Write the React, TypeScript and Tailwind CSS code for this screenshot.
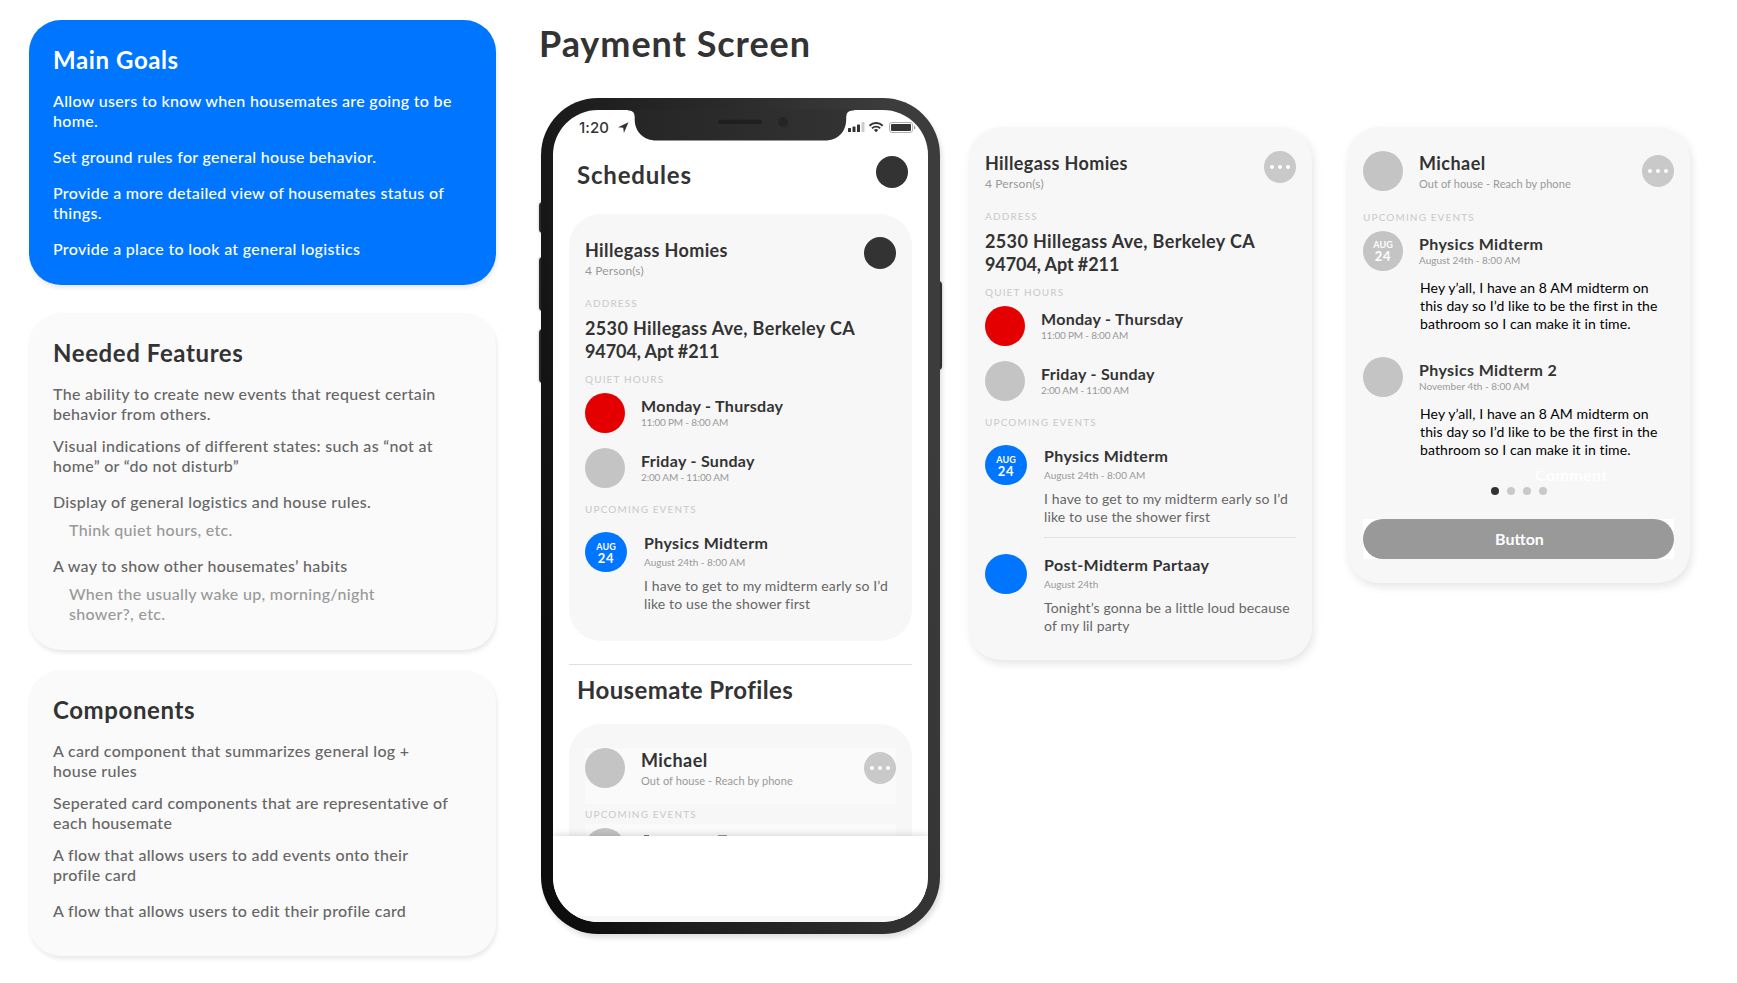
import type { ReactNode } from "react";

function NoteCard({ title, blue, className, children }: { title: string; blue?: boolean; className: string; children: ReactNode }) {
  return (
    <section
      className={`rounded-[32px] px-6 pt-6 shadow-[1px_3px_4px_rgba(0,0,0,0.09)] ${
        blue ? "bg-[#0075ff] text-white" : "bg-[#fafafa] text-[#666]"
      } ${className}`}
    >
      <h2 className={`mb-[15px] text-2xl leading-8 font-bold tracking-[0.6px] ${blue ? "text-white" : "text-[#333]"}`}>{title}</h2>
      <div className="flex flex-col text-base leading-5 font-medium tracking-[0.31px]">{children}</div>
    </section>
  );
}

function Label({ children, className = "" }: { children: ReactNode; className?: string }) {
  return <div className={`text-[10px] leading-3 font-medium tracking-[1.12px] text-[#ccc] ${className}`}>{children}</div>;
}

function MoreButton({ className = "" }: { className?: string }) {
  return (
    <div className={`flex size-8 shrink-0 items-center justify-center gap-1 rounded-full bg-[#c9c9c9] ${className}`}>
      <span className="size-1 rounded-full bg-white" />
      <span className="size-1 rounded-full bg-white" />
      <span className="size-1 rounded-full bg-white" />
    </div>
  );
}

function DateText() {
  return (
    <div className="text-center font-bold text-white">
      <div className="text-[9px] leading-[11px] tracking-[0.1px]">AUG</div>
      <div className="text-[13px] leading-[13px] tracking-[0.6px]">24</div>
    </div>
  );
}

function QuietRow({ color, days, time, timeClass }: { color: string; days: string; time: string; timeClass: string }) {
  return (
    <div className="flex h-10 gap-4">
      <div className={`size-10 shrink-0 rounded-full ${color}`} />
      <div className="pt-[3px] whitespace-nowrap">
        <div className="text-base leading-5 font-bold tracking-[0.3px] text-[#333]">{days}</div>
        <div className={`text-[10px] leading-3 text-[#999] ${timeClass}`}>{time}</div>
      </div>
    </div>
  );
}

function HouseEvent({ title, date, dated, children }: { title: string; date: string; dated?: boolean; children: ReactNode }) {
  return (
    <div className="flex gap-[17px]">
      <div className="flex h-10 w-[42px] shrink-0 items-center justify-center rounded-[50%] bg-[#0075ff] pt-0.5">{dated && <DateText />}</div>
      <div className="pt-px whitespace-nowrap">
        <div className="text-base leading-5 font-bold tracking-[0.38px] text-[#333]">{title}</div>
        <div className="mt-[3px] text-[10px] leading-3 text-[#999]">{date}</div>
        <div className="mt-[9px] text-sm leading-[18px] tracking-[0.14px] text-[#666]">{children}</div>
      </div>
    </div>
  );
}

function HouseCard({ action, className, children }: { action: ReactNode; className: string; children?: ReactNode }) {
  return (
    <section className={`w-[343px] shrink-0 rounded-[32px] bg-[#f7f7f7] px-4 pt-6 ${className}`}>
      <div className="flex h-10 justify-between">
        <div>
          <div className="mt-px text-lg leading-[22px] font-bold tracking-[0.38px] text-[#333]">Hillegass Homies</div>
          <div className="mt-0.5 text-xs leading-4 tracking-[0.12px] text-[#999]">4 Person(s)</div>
        </div>
        {action}
      </div>
      <Label className="mt-[19px]">ADDRESS</Label>
      <div className="mt-2 text-lg leading-[23px] font-bold whitespace-nowrap text-[#333]">
        <div className="tracking-[0.36px]">2530 Hillegass Ave, Berkeley CA</div>
        <div className="tracking-[-0.09px]">94704, Apt #211</div>
      </div>
      <Label className="mt-[10px]">QUIET HOURS</Label>
      <div className="mt-2 flex flex-col gap-[15px]">
        <QuietRow color="bg-[#e40000]" days="Monday - Thursday" time="11:00 PM - 8:00 AM" timeClass="tracking-[-0.2px]" />
        <QuietRow color="bg-[#c4c4c4]" days="Friday - Sunday" time="2:00 AM - 11:00 AM" timeClass="tracking-[-0.17px]" />
      </div>
      <Label className="mt-[15px] mb-[17px]">UPCOMING EVENTS</Label>
      <HouseEvent title="Physics Midterm" date="August 24th - 8:00 AM" dated>
        I have to get to my midterm early so I’d
        <br />
        like to use the shower first
      </HouseEvent>
      {children}
    </section>
  );
}

function ProfileHeader({ className = "" }: { className?: string }) {
  return (
    <div className={`flex h-14 ${className}`}>
      <div className="mr-4 size-10 rounded-full bg-[#c4c4c4]" />
      <div className="grow whitespace-nowrap">
        <div className="mt-px text-lg leading-[22px] font-bold tracking-[0.45px] text-[#333]">Michael</div>
        <div className="mt-[3px] text-[11px] leading-[14px] tracking-[0.07px] text-[#999]">Out of house - Reach by phone</div>
      </div>
      <MoreButton className="mt-1" />
    </div>
  );
}

function ProfileEvent({ title, date, dated }: { title: string; date: string; dated?: boolean }) {
  return (
    <div className="flex gap-4">
      <div className="flex size-10 shrink-0 items-center justify-center rounded-full bg-[#c4c4c4]">{dated && <DateText />}</div>
      <div className="pt-[3px] whitespace-nowrap">
        <div className="text-base leading-5 font-bold tracking-[0.38px] text-[#333]">{title}</div>
        <div className="text-[10px] leading-3 text-[#999]">{date}</div>
        <p className="mt-[13px] ml-px text-sm leading-[18px] tracking-[0.11px] text-black">
          Hey y’all, I have an 8 AM midterm on
          <br />
          this day so I’d like to be the first in the
          <br />
          bathroom so I can make it in time.
        </p>
      </div>
    </div>
  );
}

function StatusBar() {
  return (
    <div className="flex h-11 items-start pt-2 pl-[26px] text-[#333]">
      <span className="w-[39px] font-[Inter,sans-serif] text-[15px] leading-5 font-medium tracking-[0.1px]">1:20</span>
      <svg className="mt-[4px] h-[11px] w-[11px]" viewBox="0 0 11 11">
        <path d="M10.5 0.3 0 5.2 5.2 5.8 5.9 11Z" fill="currentColor" />
      </svg>
      <svg className="mt-1 ml-[219px] h-[12px] w-[80px] shrink-0" viewBox="0 0 80 12">
        <rect x="0" y="6" width="3" height="4" rx=".6" fill="#333" />
        <rect x="4.500" y="4.400" width="3" height="5.600" rx=".6" fill="#333" />
        <rect x="9" y="2.400" width="3" height="7.600" rx=".6" fill="#333" />
        <rect x="13.500" y="0" width="3" height="10" rx=".6" fill="#ccc" />
        <g fill="none" stroke="#333" strokeWidth="1.9">
          <path d="M21.500 3.700a9.400 9.400 0 0 1 13.200 0" />
          <path d="M24 6.300a5.800 5.800 0 0 1 8.200 0" />
        </g>
        <path d="M28.100 10.200 25.900 8a3.100 3.100 0 0 1 4.400 0Z" fill="#333" />
        <rect x="41.500" y=".5" width="23" height="10" rx="2.400" fill="none" stroke="#b0b0b0" />
        <rect x="43" y="2" width="20" height="7" rx="1" fill="#333" />
        <path d="M66 3.600q1.400.5 1.400 1.900T66 7.400Z" fill="#999" />
      </svg>
    </div>
  );
}

function Phone() {
  return (
    <div className="relative -ml-0.5 h-[836px] w-[403px]">
      <div className="absolute top-[104px] left-0 h-[31px] w-1 rounded-l-sm bg-[#2c2c2c] shadow-[0_0_3px_rgba(0,0,0,0.25)]" />
      <div className="absolute top-[159px] left-0 h-[54px] w-1 rounded-l-sm bg-[#2c2c2c] shadow-[0_0_3px_rgba(0,0,0,0.25)]" />
      <div className="absolute top-[231px] left-0 h-[54px] w-1 rounded-l-sm bg-[#2c2c2c] shadow-[0_0_3px_rgba(0,0,0,0.25)]" />
      <div className="absolute top-[183px] right-0 h-[89px] w-1 rounded-r-sm bg-[#333] shadow-[0_0_3px_rgba(0,0,0,0.25)]" />
      <div className="relative ml-0.5 h-[836px] w-[399px] rounded-[57px] bg-[linear-gradient(82deg,#0d0d0d_8%,#1b1b1b_25%,#2b2b2b_60%,#3c3c3c_90%)] p-3 shadow-[2px_4px_5px_rgba(0,0,0,0.12)]">
        <div className="flex h-[812px] flex-col overflow-hidden rounded-[45px] bg-white">
          <StatusBar />
          <div className="flex h-[60px] justify-between pr-5 pl-6">
            <h2 className="mt-[5px] text-2xl leading-8 font-bold tracking-[0.8px] text-[#333]">Schedules</h2>
            <div className="mt-0.5 size-8 rounded-full bg-[#333]" />
          </div>
          <HouseCard className="mx-4 h-[427px]" action={<div className="-mt-px size-8 rounded-full bg-[#333]" />} />
          <div className="mx-4 mt-[23px] h-px shrink-0 bg-[#e0e0e0]" />
          <h2 className="mt-[9px] mb-[18px] pl-6 text-2xl leading-8 font-bold tracking-[0.39px] text-[#333]">Housemate Profiles</h2>
          <section className="mx-4 h-[112px] shrink-0 overflow-hidden rounded-t-[32px] bg-[#f7f7f7] px-4 pt-6">
            <ProfileHeader className="bg-[#fafafa]" />
            <Label className="mt-1">UPCOMING EVENTS</Label>
            <div className="mt-1 flex h-12 bg-[#fafafa] pt-1">
              <div className="size-10 rounded-full bg-[#c4c4c4]" />
              <div className="mt-[7px] ml-[19px] h-px w-[5px] bg-[#777]" />
              <div className="mt-[7px] ml-[69px] h-px w-[9px] bg-[#999]" />
            </div>
          </section>
          <div className="relative h-20 shrink-0 bg-white shadow-[0_-2px_6px_rgba(0,0,0,0.12)]" />
          <div className="relative grow bg-[#f7f7f7]" />
        </div>
        <svg className="absolute top-[11px] left-[87px] h-[33px] w-[226px]" viewBox="0 0 226 33">
          <path
            d="M0 0H226V1H224.500Q218.200 1 218.200 7.500V10C218.200 22.500 209.500 31 197 31H28.500C16 31 6.700 22.500 6.700 10V7.500Q6.700 1 1 1H0Z"
            transform="translate(0 .5)"
            fill="url(#notch)"
          />
          <rect x="90" y="10.700" width="44" height="4.300" rx="2.100" fill="#1f1f1f" />
          <circle cx="155" cy="13" r="5" fill="#252525" />
          <defs>
            <linearGradient id="notch">
              <stop offset="0" stopColor="#252525" />
              <stop offset="1" stopColor="#333333" />
            </linearGradient>
          </defs>
        </svg>
      </div>
    </div>
  );
}

export default function App() {
  return (
    <main className="flex h-[983px] w-[1737px] overflow-hidden bg-white pl-[29px] font-[Lato,sans-serif]">
      <div className="w-[467px] shrink-0 pt-5">
        <NoteCard title="Main Goals" blue className="h-[265px]">
          <p>
            Allow users to know when housemates are going to be
            <br />
            home.
          </p>
          <p className="mt-4">Set ground rules for general house behavior.</p>
          <p className="mt-4">
            Provide a more detailed view of housemates status of
            <br />
            things.
          </p>
          <p className="mt-4">Provide a place to look at general logistics</p>
        </NoteCard>
        <NoteCard title="Needed Features" className="mt-7 h-[337px]">
          <p>
            The ability to create new events that request certain
            <br />
            behavior from others.
          </p>
          <p className="mt-3">
            Visual indications of different states: such as “not at
            <br />
            home” or “do not disturb”
          </p>
          <p className="mt-4">Display of general logistics and house rules.</p>
          <p className="mt-2 ml-4 text-[#999]">Think quiet hours, etc.</p>
          <p className="mt-4">A way to show other housemates’ habits</p>
          <p className="mt-2 ml-4 text-[#999]">
            When the usually wake up, morning/night
            <br />
            shower?, etc.
          </p>
        </NoteCard>
        <NoteCard title="Components" className="mt-5 h-[286px]">
          <p>
            A card component that summarizes general log +
            <br />
            house rules
          </p>
          <p className="mt-3">
            Seperated card components that are representative of
            <br />
            each housemate
          </p>
          <p className="mt-3">
            A flow that allows users to add events onto their
            <br />
            profile card
          </p>
          <p className="mt-4">A flow that allows users to edit their profile card</p>
        </NoteCard>
      </div>

      <div className="ml-[45px] w-[399px] shrink-0">
        <h1 className="-ml-0.5 h-[98px] pt-[21px] text-4xl leading-[44px] font-bold tracking-[0.95px] whitespace-nowrap text-[#333]">Payment Screen</h1>
        <Phone />
      </div>

      <HouseCard className="mt-[127px] ml-[29px] h-[533px] shadow-[2px_4px_8px_rgba(0,0,0,0.1)]" action={<MoreButton />}>
        <div className="mt-[11px] mb-4 ml-[59px] h-px bg-[#e0e0e0]" />
        <HouseEvent title="Post-Midterm Partaay" date="August 24th">
          Tonight’s gonna be a little loud because
          <br />
          of my lil party
        </HouseEvent>
      </HouseCard>

      <section className="relative mt-[127px] ml-[35px] h-[456px] w-[343px] shrink-0 rounded-[32px] bg-[#f7f7f7] px-4 pt-6 shadow-[2px_4px_8px_rgba(0,0,0,0.1)]">
        <ProfileHeader />
        <Label className="mt-1 mb-2">UPCOMING EVENTS</Label>
        <div className="flex flex-col gap-6">
          <ProfileEvent title="Physics Midterm" date="August 24th - 8:00 AM" dated />
          <ProfileEvent title="Physics Midterm 2" date="November 4th - 8:00 AM" />
        </div>
        <div className="absolute top-[344px] left-[188px] flex h-[14px] items-end overflow-hidden text-base leading-5 font-bold tracking-[0.4px] text-white">
          Comment
        </div>
        <div className="mt-7 flex justify-center gap-2">
          <span className="size-2 rounded-full bg-[#333]" />
          <span className="size-2 rounded-full bg-[#c9c9c9]" />
          <span className="size-2 rounded-full bg-[#c9c9c9]" />
          <span className="size-2 rounded-full bg-[#c9c9c9]" />
        </div>
        <div className="mt-6 bg-white">
          <button className="block h-10 w-full rounded-full bg-[#999] pl-0.5 text-base leading-10 font-bold text-white">Button</button>
        </div>
      </section>
    </main>
  );
}
